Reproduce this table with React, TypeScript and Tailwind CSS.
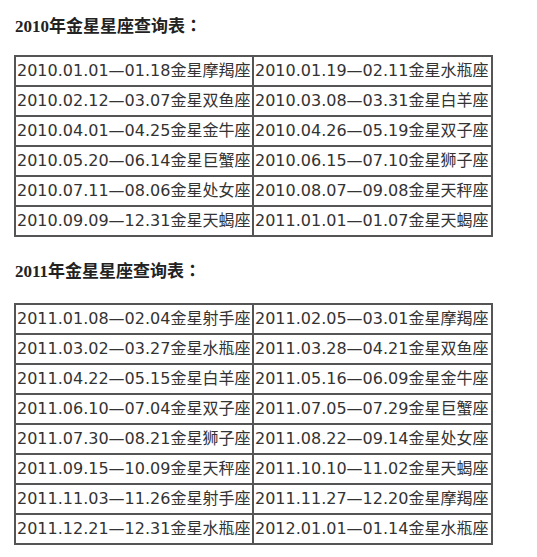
import React from "react";

const t2010: [string, string][] = [
  ["2010.01.01—01.18金星摩羯座", "2010.01.19—02.11金星水瓶座"],
  ["2010.02.12—03.07金星双鱼座", "2010.03.08—03.31金星白羊座"],
  ["2010.04.01—04.25金星金牛座", "2010.04.26—05.19金星双子座"],
  ["2010.05.20—06.14金星巨蟹座", "2010.06.15—07.10金星狮子座"],
  ["2010.07.11—08.06金星处女座", "2010.08.07—09.08金星天秤座"],
  ["2010.09.09—12.31金星天蝎座", "2011.01.01—01.07金星天蝎座"],
];

const t2011: [string, string][] = [
  ["2011.01.08—02.04金星射手座", "2011.02.05—03.01金星摩羯座"],
  ["2011.03.02—03.27金星水瓶座", "2011.03.28—04.21金星双鱼座"],
  ["2011.04.22—05.15金星白羊座", "2011.05.16—06.09金星金牛座"],
  ["2011.06.10—07.04金星双子座", "2011.07.05—07.29金星巨蟹座"],
  ["2011.07.30—08.21金星狮子座", "2011.08.22—09.14金星处女座"],
  ["2011.09.15—10.09金星天秤座", "2011.10.10—11.02金星天蝎座"],
  ["2011.11.03—11.26金星射手座", "2011.11.27—12.20金星摩羯座"],
  ["2011.12.21—12.31金星水瓶座", "2012.01.01—01.14金星水瓶座"],
];

function Table({ rows }: { rows: [string, string][] }) {
  return (
    <table className="border border-[#555] border-separate border-spacing-0 table-fixed w-[477px]">
      <colgroup>
        <col className="w-[238px]" />
        <col className="w-[239px]" />
      </colgroup>
      <tbody>
        {rows.map((r, i) => (
          <tr key={i}>
            {r.map((c, j) => (
              <td
                key={j}
                className="border border-[#555] p-[1px] h-[30px] leading-[26px] text-[16px] text-[#333] whitespace-nowrap overflow-hidden"
              >
                {c}
              </td>
            ))}
          </tr>
        ))}
      </tbody>
    </table>
  );
}

function Heading({ year, className }: { year: string; className: string }) {
  return (
    <h2
      className={`${className} h-[20px] ml-[1px] text-[17px] leading-[20px] font-bold text-[#222] whitespace-nowrap`}
      style={{ fontFamily: '"Liberation Serif", "Noto Sans CJK SC", serif' }}
    >
      {year}年金星星座查询表
      <span style={{ fontFamily: '"Noto Sans CJK TC", sans-serif' }}>：</span>
    </h2>
  );
}

export default function App() {
  return (
    <div
      className="bg-white w-[537px] min-h-[557px] pl-[14px] pt-[15px]"
      style={{ fontFamily: '"DejaVu Sans", "Noto Sans CJK SC", sans-serif' }}
    >
      <Heading year="2010" className="" />
      <div className="mt-[20px]">
        <Table rows={t2010} />
      </div>
      <Heading year="2011" className="mt-[23px]" />
      <div className="mt-[23px]">
        <Table rows={t2011} />
      </div>
    </div>
  );
}
